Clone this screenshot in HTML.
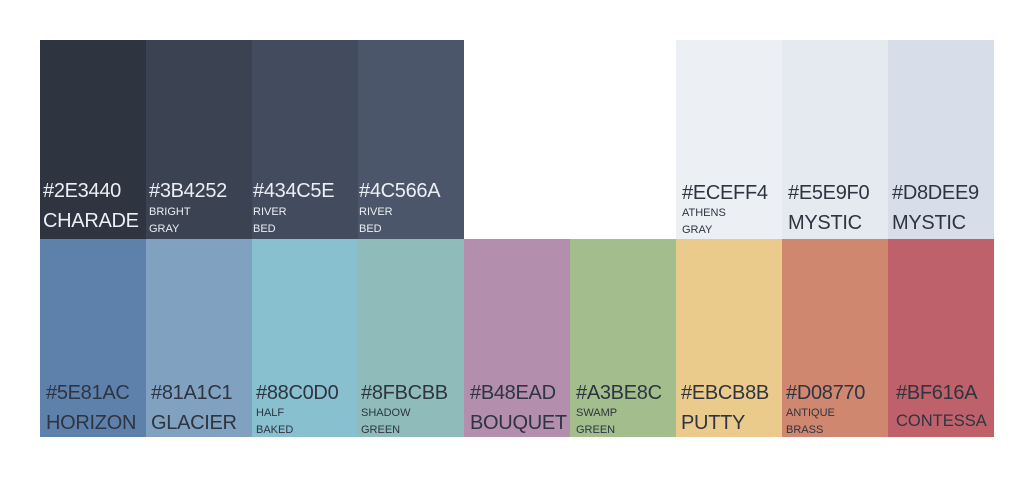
<!DOCTYPE html><html><head><meta charset="utf-8"><style>
body{margin:0;width:1034px;height:478px;background:#fff;position:relative;font-family:"Liberation Sans","DejaVu Sans",sans-serif;overflow:hidden}
.s{position:absolute;width:106px}
.r1{top:40px;height:199px}.r2{top:239px;height:198px}
.t{position:absolute;white-space:nowrap}
.h{font-size:20px;line-height:22px;letter-spacing:-0.3px}
.n{font-size:20px;line-height:22px;letter-spacing:-0.3px}
.m{font-size:11px;line-height:17px}
.l{color:#ECEFF4}.d{color:#2E3440}
</style></head><body>
<div class="s r1" style="left:40px;background:#2E3440"><div class="t h l" style="left:3px;top:140px">#2E3440</div><div class="t n l" style="left:3px;top:170px">CHARADE</div></div>
<div class="s r1" style="left:146px;background:#3B4252"><div class="t h l" style="left:3px;top:140px">#3B4252</div><div class="t m l" style="left:3px;top:164px">BRIGHT<br>GRAY</div></div>
<div class="s r1" style="left:252px;background:#434C5E"><div class="t h l" style="left:1px;top:140px">#434C5E</div><div class="t m l" style="left:1px;top:164px">RIVER<br>BED</div></div>
<div class="s r1" style="left:358px;background:#4C566A"><div class="t h l" style="left:1px;top:140px">#4C566A</div><div class="t m l" style="left:1px;top:164px">RIVER<br>BED</div></div>
<div class="s r1" style="left:676px;background:#ECEFF4"><div class="t h d" style="left:6px;top:142px">#ECEFF4</div><div class="t m d" style="left:6px;top:165px">ATHENS<br>GRAY</div></div>
<div class="s r1" style="left:782px;background:#E5E9F0"><div class="t h d" style="left:6px;top:142px">#E5E9F0</div><div class="t n d" style="left:6px;top:172px">MYSTIC</div></div>
<div class="s r1" style="left:888px;background:#D8DEE9"><div class="t h d" style="left:4px;top:142px">#D8DEE9</div><div class="t n d" style="left:4px;top:172px">MYSTIC</div></div>

<div class="s r2" style="left:40px;background:#5E81AC"><div class="t h d" style="left:6px;top:143px">#5E81AC</div><div class="t n d" style="left:6px;top:173px">HORIZON</div></div>
<div class="s r2" style="left:146px;background:#81A1C1"><div class="t h d" style="left:5px;top:143px">#81A1C1</div><div class="t n d" style="left:5px;top:173px">GLACIER</div></div>
<div class="s r2" style="left:252px;background:#88C0D0"><div class="t h d" style="left:4px;top:143px">#88C0D0</div><div class="t m d" style="left:4px;top:166px">HALF<br>BAKED</div></div>
<div class="s r2" style="left:358px;background:#8FBCBB"><div class="t h d" style="left:3px;top:143px">#8FBCBB</div><div class="t m d" style="left:3px;top:166px">SHADOW<br>GREEN</div></div>
<div class="s r2" style="left:464px;background:#B48EAD"><div class="t h d" style="left:6px;top:143px">#B48EAD</div><div class="t n d" style="left:6px;top:173px">BOUQUET</div></div>
<div class="s r2" style="left:570px;background:#A3BE8C"><div class="t h d" style="left:6px;top:143px">#A3BE8C</div><div class="t m d" style="left:6px;top:166px">SWAMP<br>GREEN</div></div>
<div class="s r2" style="left:676px;background:#EBCB8B"><div class="t h d" style="left:5px;top:143px">#EBCB8B</div><div class="t n d" style="left:5px;top:173px">PUTTY</div></div>
<div class="s r2" style="left:782px;background:#D08770"><div class="t h d" style="left:4px;top:143px">#D08770</div><div class="t m d" style="left:4px;top:166px">ANTIQUE<br>BRASS</div></div>
<div class="s r2" style="left:888px;background:#BF616A"><div class="t h d" style="left:8px;top:143px">#BF616A</div><div class="t d" style="left:8px;top:172px;font-size:16.5px;line-height:20px">CONTESSA</div></div>
</body></html>
